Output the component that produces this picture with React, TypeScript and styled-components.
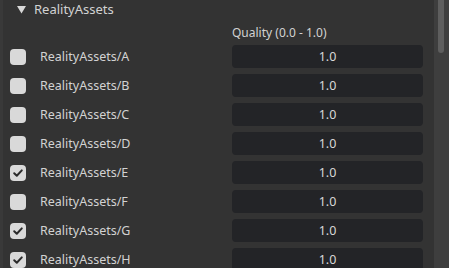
import React from 'react';
import styled, { createGlobalStyle } from 'styled-components';

const GlobalStyle = createGlobalStyle`
    html, body {
        margin: 0;
        padding: 0;
        background: #333333;
        overflow: hidden;
    }
    body {
        font-family: 'Noto Sans', 'Open Sans', sans-serif;
    }
`

const Frame = styled.div`
    width: 449px;
    height: 268px;
    display: flex;
    background: #333333;
    overflow: hidden;
`

const Panel = styled.div`
    flex: 1;
    border-left: 3px solid #393939;
    padding: 0 11px 0 7px;
    display: flex;
    flex-direction: column;
`

const Header = styled.div`
    height: 21px;
    display: flex;
    align-items: center;
    gap: 8px;
    padding-left: 7px;
    color: #d2d2d2;
    font-size: 13px;
`

const Triangle = styled.svg`
    width: 9px;
    height: 8px;
    margin-top: 1px;
`

const Grid = styled.div`
    display: grid;
    grid-template-columns: 222px 191px;
    row-gap: 6px;
`

const ColumnLabel = styled.div`
    grid-column: 2;
    height: 18px;
    color: #d2d2d2;
    font-size: 12px;
    line-height: 24px;
    margin-top: 3px;
`

const NameCell = styled.div`
    display: flex;
    align-items: center;
    gap: 14px;
    height: 23px;
    color: #d2d2d2;
    font-size: 12.5px;
`

const Box = styled.div<{ $checked: boolean }>`
    width: 16px;
    height: 16px;
    border-radius: 4px;
    background: #d9d9d9;
    display: flex;
    align-items: center;
    justify-content: center;
`

const ValueBox = styled.div`
    height: 23px;
    border-radius: 4px;
    background: #232427;
    color: #d8d8d8;
    font-size: 12.5px;
    display: flex;
    align-items: center;
    justify-content: center;
`

const Track = styled.div`
    width: 15px;
    background: #3e3e3e;
    display: flex;
    justify-content: center;
`

const Thumb = styled.div`
    width: 6px;
    height: 53px;
    margin-left: -1px;
    border-radius: 0 0 3px 3px;
    background: #5e5e5e;
`

const assets = [
    { name: 'A', checked: false },
    { name: 'B', checked: false },
    { name: 'C', checked: false },
    { name: 'D', checked: false },
    { name: 'E', checked: true },
    { name: 'F', checked: false },
    { name: 'G', checked: true },
    { name: 'H', checked: true },
]

export default function App() {
    return (
        <Frame>
            <GlobalStyle />
            <Panel>
                <Header>
                    <Triangle viewBox="0 0 9 8">
                        <path d="M0 0 H9 L4.5 7.5 Z" fill="#d8d8d8" />
                    </Triangle>
                    RealityAssets
                </Header>
                <Grid>
                    <ColumnLabel>Quality (0.0 - 1.0)</ColumnLabel>
                    {assets.map(a => (
                        <React.Fragment key={a.name}>
                            <NameCell>
                                <Box $checked={a.checked}>
                                    {a.checked && (
                                        <svg width="12" height="12" viewBox="0 0 12 12">
                                            <path d="M2.2 6.2 L4.8 8.8 L9.8 3.4" fill="none" stroke="#2a2a2a" strokeWidth="2" strokeLinecap="round" strokeLinejoin="round" />
                                        </svg>
                                    )}
                                </Box>
                                RealityAssets/{a.name}
                            </NameCell>
                            <ValueBox>1.0</ValueBox>
                        </React.Fragment>
                    ))}
                </Grid>
            </Panel>
            <Track>
                <Thumb />
            </Track>
        </Frame>
    )
}
